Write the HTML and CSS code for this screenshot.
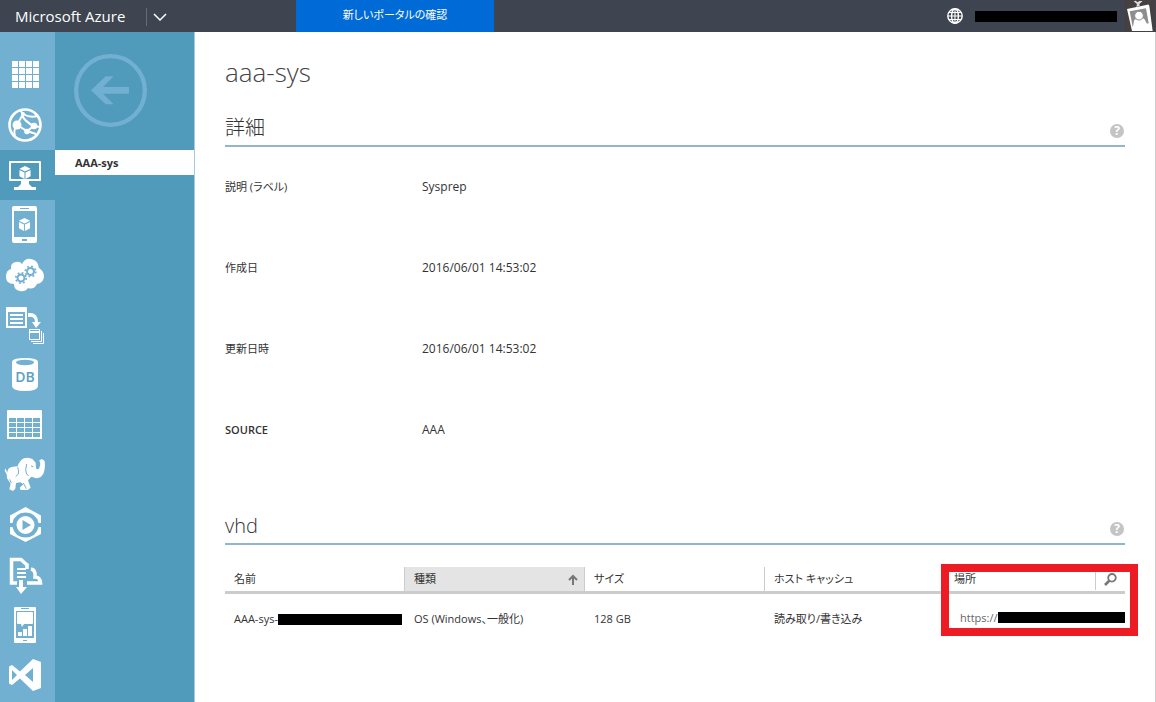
FILE: index.html
```html
<!DOCTYPE html>
<html lang="ja">
<head>
<meta charset="utf-8">
<title>Microsoft Azure - aaa-sys</title>
<link rel="stylesheet" href="styles.css">
</head>
<body>
<svg class="sprite" aria-hidden="true">
  <symbol id="cube" viewBox="0 0 12 14">
    <path d="M6 0 12 3 6 6 0 3Z M0 4.2 5.5 7V14L0 11Z M12 4.2 6.5 7V14L12 11Z"/>
  </symbol>
  <symbol id="gear" viewBox="-6 -6 12 12">
    <circle r="3.2" fill="none" stroke="currentColor" stroke-width="1.8"/>
    <circle r="4.8" fill="none" stroke="currentColor" stroke-width="1.6" stroke-dasharray="1.7 2.07"/>
  </symbol>
</svg>
<header class="topbar">
  <a class="brand" href="#">Microsoft Azure</a>
  <button class="brand-menu" type="button" aria-label="メニュー">
    <svg width="14" height="8" viewBox="0 0 14 8"><path d="M1 1l6 6 6-6" fill="none" stroke="currentColor" stroke-width="1.5"/></svg>
  </button>
  <a class="new-portal" href="#">新しいポータルの確認</a>
  <div class="account">
    <button class="globe" type="button" aria-label="言語">
      <svg width="16" height="16" viewBox="0 0 16 16"><g fill="none" stroke="currentColor" stroke-width="1.4"><circle cx="8" cy="8" r="7.2"/><ellipse cx="8" cy="8" rx="3.4" ry="7.2"/><path d="M8 1v14M1 8h14M2 4.500h12M2 11.500h12" stroke-width="1.100"/></g></svg>
    </button>
    <span class="redacted redacted-account"></span>
    <button class="avatar" type="button" aria-label="アカウント">
      <svg width="31" height="32" viewBox="0 0 93 96">
        <rect width="93" height="96" fill="#454142"/>
        <path d="M9 27 70 14Q75 13 76 18L86 93H24Z" fill="#fff"/>
        <path d="M17 34 66 25 74 70 26 80Z" fill="#8d8d8d"/>
        <path d="M27 81 30 62Q32 57 38 58L56 55Q61 55 63 60L72 78V84L28 90Z" fill="#fff"/>
        <circle cx="45" cy="47" r="13" fill="#fff" stroke="#8d8d8d" stroke-width="3"/>
        <path d="M29 4 39 12 37 20 47 18 46 12 56 3H46L41 7 35 2Z" fill="#ddd"/>
      </svg>
    </button>
  </div>
</header>
<div class="shell">
  <nav class="rail" aria-label="サービス">
    <a href="#" aria-label="すべてのアイテム"><svg viewBox="0 0 55 50"><path d="M12 11h6v6h-6zm7 0h6v6h-6zm7 0h6v6h-6zm7 0h6v6h-6zM12 18h6v6h-6zm7 0h6v6h-6zm7 0h6v6h-6zm7 0h6v6h-6zM12 25h6v6h-6zm7 0h6v6h-6zm7 0h6v6h-6zm7 0h6v6h-6zM12 32h6v6h-6zm7 0h6v6h-6zm7 0h6v6h-6zm7 0h6v6h-6z"/></svg></a>
    <a href="#" aria-label="Web Apps"><svg viewBox="0 0 55 50"><g fill="none" stroke="currentColor"><circle cx="25" cy="25" r="15.500" stroke-width="2.600"/><path d="M17 25 23 14Q30 18 37 16M23 14 20 10M17 25 27 31 34 26M22 15Q25 22 34 26L40 27M17 25Q13 30 15 36M27 31 36 34" stroke-width="2"/></g><circle cx="17" cy="25" r="4.500"/><circle cx="34" cy="26" r="3.300"/><circle cx="27" cy="31.500" r="2.800"/><circle cx="23" cy="14" r="2"/></svg></a>
    <a class="active" href="#" aria-label="仮想マシン"><svg viewBox="0 0 55 50"><path fill-rule="evenodd" d="M10 11h30q1 0 1 1v18q0 1-1 1H10q-1 0-1-1V12q0-1 1-1zm1 2v16h28V13zM21 31h8v3l3 3h4v3H14v-3h4l3-3z"/><use href="#cube" x="19" y="16" width="12" height="13"/></svg></a>
    <a href="#" aria-label="モバイル サービス"><svg viewBox="0 0 55 50"><path fill-rule="evenodd" d="M14 6h21q2 0 2 2v33q0 2-2 2H14q-2 0-2-2V8q0-2 2-2zm0 5v26h21V11zm6-3v1h9V8zm2 31v2h5v-2z"/><use href="#cube" x="18.500" y="18" width="12" height="13"/></svg></a>
    <a href="#" aria-label="クラウド サービス"><svg viewBox="0 0 55 50"><path d="M11 19Q10 13 16 12 20 11 22 14 25 8 31 9 38 10 39 18 44 21 44 27 43 33 37 34 34 40 28 38 25 42 20 41 14 40 14 34 6 34 6 27 6 20 11 19Z"/><g class="cut"><use href="#gear" x="14.500" y="21.500" width="13" height="13"/><use href="#gear" x="24" y="15" width="13" height="13"/></g></svg></a>
    <a href="#" aria-label="バッチ サービス"><svg viewBox="0 0 55 50"><path fill-rule="evenodd" d="M7 7h19q1 0 1 1v20H6V8q0-1 1-1zm1 5v14h17V12zM10 14h13v2H10zm0 4h13v2H10zm0 4h13v2H10z"/><path d="M28 13q10-1 10 9h3l-5 6-4-6h3q0-6-7-5z"/><path fill-rule="evenodd" d="M29 29h11v11H29zm1 4v6h9v-6zm0-3v1h9v-1z"/><path d="M41.500 31v10.500H31M43.500 33v10.500H33" fill="none" stroke="currentColor"/></svg></a>
    <a href="#" aria-label="SQL データベース"><svg viewBox="0 0 55 50"><path d="M12 12Q12 8 25 8T38 12V36Q38 41 25 41T12 36Z"/><ellipse class="cut-fill" cx="25" cy="12.500" rx="9" ry="2.700"/><text class="db" x="25" y="32" text-anchor="middle">DB</text></svg></a>
    <a href="#" aria-label="ストレージ"><svg viewBox="0 0 55 50"><path fill-rule="evenodd" d="M8 10h33q1 0 1 1v28H7V11q0-1 1-1zM9 18v4h7v-4zm8 0v4h7v-4zm8 0v4h7v-4zm8 0v4h7v-4zM9 23v4h7v-4zm8 0v4h7v-4zm8 0v4h7v-4zm8 0v4h7v-4zM9 28v4h7v-4zm8 0v4h7v-4zm8 0v4h7v-4zm8 0v4h7v-4zM9 33v4h7v-4zm8 0v4h7v-4zm8 0v4h7v-4zm8 0v4h7v-4z"/></svg></a>
    <a href="#" aria-label="HDInsight"><svg viewBox="0 0 165 150"><path d="M16 55 22 68Q22 52 38 50L53 49Q58 32 72 25 88 20 98 28L107 38 108 54Q113 62 118 54L121 42 118 31 126 27 134 33Q137 58 129 73 120 87 106 84L94 80 84 91 92 113 83 120H62L59 113 70 103 61 97 48 99 46 116 39 123 28 118 32 101 21 85 20 73 14 62Z"/><path d="M53 52Q58 63 55 72L47 80M80 42Q74 62 80 72L86 78M70 99 79 116M29 88 34 99M93 48l7 2" fill="none" class="cut-line"/></svg></a>
    <a href="#" aria-label="メディア サービス"><svg viewBox="0 0 55 50"><path d="M25.500 7 41 15.500V23H38.500Q36.500 13 25.500 12.500 14.500 13 12.500 23H10V15.500ZM10 27h2.500Q14.500 37 25.500 37.500 36.500 37 38.500 27H41v7L25.500 42 10 34Z"/><path fill-rule="evenodd" d="M25.500 16a9 9 0 0 1 0 18 9 9 0 0 1 0-18zM22.500 20v10l8.500-5z"/></svg></a>
    <a href="#" aria-label="復旧サービス"><svg viewBox="0 0 55 50"><path d="M17 33H11.500V9.500H21L27 15M27 19V13.500M31 19Q36 20 35 27 40 27 40.500 33H27" fill="none" stroke="currentColor" stroke-width="3.500"/><path d="M17 18h9v2h-9zm0 4h9v2h-9zm0 4h9v2h-9zM19 30h4v7h4l-6 7-5-7h3z"/></svg></a>
    <a href="#" aria-label="モバイル エンゲージメント"><svg viewBox="0 0 55 50"><path fill-rule="evenodd" d="M15 7h20q1 0 1 1v34q0 1-1 1H15q-1 0-1-1V8q0-1 1-1zm1 4v27h18V11zm5-3v1h8V8zm2 32v1h4v-1z"/><path d="M18 12h14q1 0 1 1v10q0 1-1 1h-8l-2 3-1-3h-3q-1 0-1-1V13q0-1 1-1zM18 32h4v4h-4zm5-3h4v7h-4zm5-3h4v10h-4z"/></svg></a>
    <a href="#" aria-label="Visual Studio"><svg viewBox="0 0 55 50"><path fill-rule="evenodd" d="M33 9 41 12V38L33 41 20 28.500 12 35 9 33.500V16.500L12 15 20 21.500ZM33 18 25 25 33 32ZM12 20V30L17 25Z"/></svg></a>
  </nav>
  <aside class="panel">
    <button class="back" type="button" aria-label="戻る">
      <svg width="73" height="73" viewBox="0 0 219 219"><circle cx="109.500" cy="109.500" r="103" fill="none" stroke="currentColor" stroke-width="13"/><path d="M51 109 95 67H119L87 99H165V119H87L119 151H95Z"/></svg>
    </button>
    <a class="panel-item" href="#">AAA-sys</a>
  </aside>
  <main class="content">
    <h1>aaa-sys</h1>
    <section>
      <div class="section-head">
        <h2>詳細</h2>
        <button class="help" type="button" aria-label="ヘルプ">?</button>
      </div>
      <dl class="details">
        <div><dt>説明 (ラベル)</dt><dd>Sysprep</dd></div>
        <div><dt>作成日</dt><dd>2016/06/01 14:53:02</dd></div>
        <div><dt>更新日時</dt><dd>2016/06/01 14:53:02</dd></div>
        <div><dt class="strong">SOURCE</dt><dd>AAA</dd></div>
      </dl>
    </section>
    <section>
      <div class="section-head">
        <h2>vhd</h2>
        <button class="help" type="button" aria-label="ヘルプ">?</button>
      </div>
      <div class="table-wrap">
        <table>
          <thead>
            <tr>
              <th scope="col">名前</th>
              <th scope="col" class="sorted"><div class="th-row">種類<svg width="10" height="11" viewBox="0 0 10 11"><path d="M5 11V2M1 6l4-4 4 4" fill="none" stroke="#777" stroke-width="2"/></svg></div></th>
              <th scope="col">サイズ</th>
              <th scope="col">ホスト キャッシュ</th>
              <th scope="col" class="place"><div class="th-row">場所<button class="search" type="button" aria-label="検索"><svg width="13" height="13" viewBox="0 0 13 13"><g fill="none" stroke="#777"><circle cx="8" cy="4.800" r="3.800" stroke-width="1.800"/><path d="M5.500 7.500 1 12" stroke-width="2.600"/></g></svg></button></div></th>
            </tr>
          </thead>
          <tbody>
            <tr>
              <td><span class="cell">AAA-sys-<span class="redacted"></span></span></td>
              <td>OS (Windows、一般化)</td>
              <td>128 GB</td>
              <td>読み取り/書き込み</td>
              <td class="url"><span class="cell">https://<span class="redacted"></span></span></td>
            </tr>
          </tbody>
        </table>
        <div class="marker"></div>
      </div>
    </section>
  </main>
</div>
</body>
</html>
```
FILE: styles.css
```css
* { box-sizing: border-box; }
body {
  margin: 0;
  min-height: 100vh;
  display: flex;
  flex-direction: column;
  font: 12px/16px "Open Sans", "Noto Sans CJK JP", sans-serif;
  font-feature-settings: "palt";
  color: #333;
  background: #fff;
}
button { border: 0; padding: 0; background: none; font: inherit; color: inherit; }
a { color: inherit; text-decoration: none; }
svg { display: block; fill: currentColor; }
.sprite { position: absolute; width: 0; height: 0; }
.redacted { display: block; flex: 1; height: 11px; background: #000; }

.topbar { display: flex; height: 32px; background: #3e4450; color: #fff; }
.brand { width: 146px; padding-left: 15px; font-size: 15px; line-height: 32px; white-space: nowrap; }
.brand-menu {
  width: 26px;
  height: 18px;
  margin: 8px 124px 0 0;
  border-left: 1px solid #656a74;
  display: flex;
  justify-content: center;
  align-items: center;
}
.new-portal {
  width: 198px;
  background: #006bd6;
  font-size: 11px;
  line-height: 30px;
  text-align: center;
}
.account { display: flex; align-items: center; margin-left: auto; padding-right: 1px; }
.globe { margin-right: 12px; }
.redacted-account { flex: none; width: 142px; margin-right: 7px; }

.shell { flex: 1; display: flex; }
.rail { width: 55px; padding-top: 18px; background: #72b0d1; color: #fff; }
.rail a { display: block; height: 50px; }
.rail .active { background: #509abb; }
.cut { color: #72b0d1; }
.cut-fill { fill: #72b0d1; }
.cut-line { stroke: #72b0d1; stroke-width: 3; }
.db { fill: #5b9fc2; font-size: 14px; font-weight: 600; }

.panel { width: 140px; padding-top: 22px; background: #509abb; border-right: 1px solid #a5cbdd; }
.back { display: block; margin: 0 0 23px 19px; color: #72b0d1; }
.panel-item {
  display: block;
  padding-left: 20px;
  background: #fff;
  font-size: 11px;
  line-height: 25px;
  font-weight: 700;
}

.content { flex: 1; min-width: 0; padding: 23px 30px 0; border-right: 1px solid #ccc; }
h1, h2 { margin: 0; font-weight: 300; }
h1 { font-size: 26px; line-height: 34px; color: #444; }
.section-head {
  display: flex;
  justify-content: space-between;
  align-items: center;
  height: 36px;
  border-bottom: 2px solid #8fb6c9;
}
h1 + section { margin-top: 22px; }
h2 { font-size: 20px; line-height: 32px; }
.help {
  width: 14px;
  height: 14px;
  margin: 5px 1px 0 0;
  border-radius: 50%;
  background: #c4c4c4;
  color: #fff;
  font-size: 12px;
  line-height: 14px;
  font-weight: 700;
}
.details { margin: 0; padding-top: 32px; }
.details div { display: flex; height: 81px; }
dt { width: 197px; font-size: 11px; }
dd { margin: 0; }
.strong { font-weight: 600; }
section + section { margin-top: 6px; }

.table-wrap { position: relative; margin-top: 22px; }
table { width: 100%; table-layout: fixed; border-collapse: separate; border-spacing: 0; }
th {
  height: 27px;
  padding: 0 9px;
  border-bottom: 3px solid #ccc;
  border-right: 1px solid #ccc;
  font-size: 11px;
  font-weight: 400;
  text-align: left;
}
th:nth-child(4), th:last-child { border-right: 0; }
.sorted { background: #e4e4e4; }
.th-row { display: flex; justify-content: space-between; align-items: center; }
.sorted .th-row { margin-right: -3px; }
.place { padding-right: 0; }
.search { width: 30px; height: 22px; padding-left: 8px; border-left: 1px solid #ccc; }
td { padding: 17px 9px 0; font-size: 11px; white-space: nowrap; }
td:first-child { padding-right: 3px; }
td:nth-child(2) { padding-right: 0; }
.cell { display: flex; align-items: center; }
.url { padding: 14px 0 0 15px; color: #666; }
.marker { position: absolute; top: -3px; right: -13px; width: 197px; height: 72px; border: 8px solid #ed1c24; }
```
